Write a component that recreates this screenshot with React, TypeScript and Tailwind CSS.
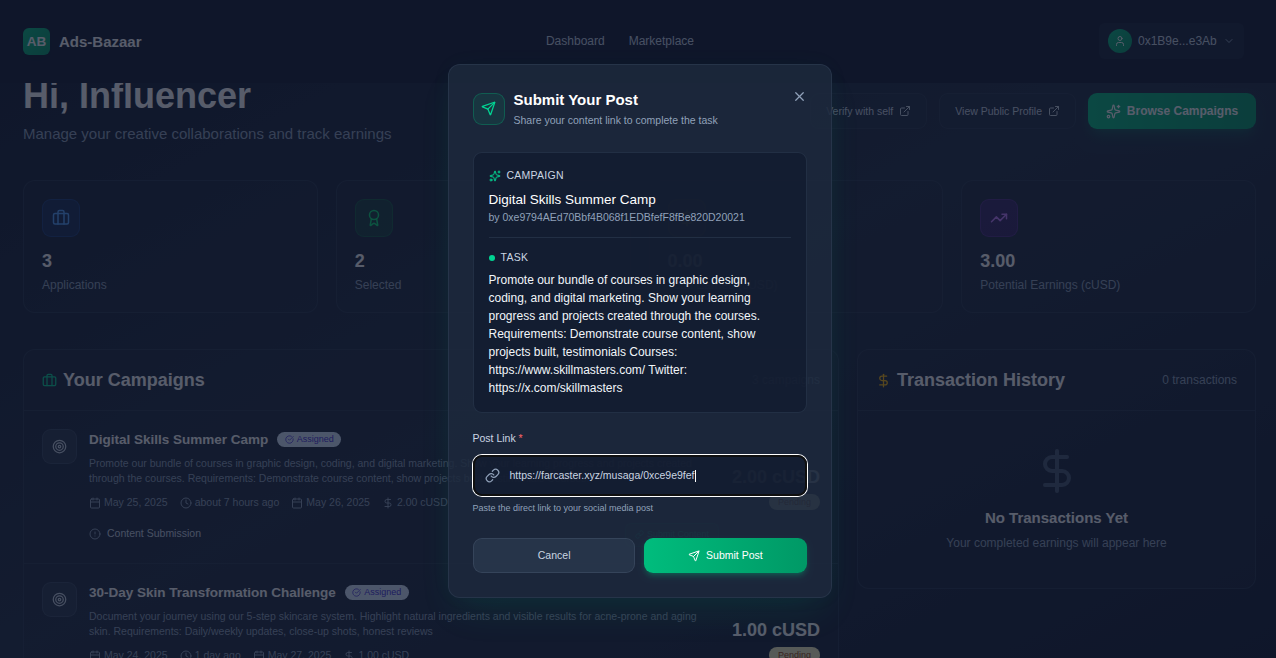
import React from "react";
import {
  Award,
  Briefcase,
  Calendar,
  ChevronDown,
  CircleAlert,
  CircleCheckBig,
  Clock,
  DollarSign,
  ExternalLink,
  Link as LinkIcon,
  Send,
  Sparkles,
  Target,
  TrendingUp,
  User,
  X,
} from "lucide-react";

type Stat = { value: string; label: string; icon: React.ReactNode; tone: string };

const stats: Stat[] = [
  {
    value: "3",
    label: "Applications",
    icon: <Briefcase className="size-[18px]" />,
    tone: "bg-blue-600/15 border-blue-500/20 text-blue-400",
  },
  {
    value: "2",
    label: "Selected",
    icon: <Award className="size-[18px]" />,
    tone: "bg-green-500/15 border-green-500/20 text-green-400",
  },
  {
    value: "0.00",
    label: "Total Earned (cUSD)",
    icon: <DollarSign className="size-[18px]" />,
    tone: "bg-amber-500/15 border-amber-500/20 text-amber-400",
  },
  {
    value: "3.00",
    label: "Potential Earnings (cUSD)",
    icon: <TrendingUp className="size-[18px]" />,
    tone: "bg-purple-600/20 border-purple-500/20 text-purple-400",
  },
];

type Campaign = {
  title: string;
  lines: string[];
  start: string;
  applied: string;
  due: string;
  amount: string;
};

const campaigns: Campaign[] = [
  {
    title: "Digital Skills Summer Camp",
    lines: [
      "Promote our bundle of courses in graphic design, coding, and digital marketing. Show your learning progress and projects created",
      "through the courses. Requirements: Demonstrate course content, show projects built, testimonials Courses:",
    ],
    start: "May 25, 2025",
    applied: "about 7 hours ago",
    due: "May 26, 2025",
    amount: "2.00 cUSD",
  },
  {
    title: "30-Day Skin Transformation Challenge",
    lines: [
      "Document your journey using our 5-step skincare system. Highlight natural ingredients and visible results for acne-prone and aging",
      "skin. Requirements: Daily/weekly updates, close-up shots, honest reviews",
    ],
    start: "May 24, 2025",
    applied: "1 day ago",
    due: "May 27, 2025",
    amount: "1.00 cUSD",
  },
];

function Header() {
  return (
    <header className="flex h-[83px] shrink-0 items-center justify-between bg-slate-900 pr-8 pl-[23px]">
      <div className="flex w-[360px] items-center gap-[9px]">
        <div className="flex size-[27px] items-center justify-center rounded-md bg-linear-to-br from-emerald-500 to-emerald-600 pt-px text-[13.5px] font-bold text-white shadow-lg">
          AB
        </div>
        <span className="text-[15px] leading-[21px] font-bold text-white">Ads-Bazaar</span>
      </div>
      <nav className="flex gap-6 pr-[14px] pb-0.5 text-[12px] text-slate-300">
        <a>Dashboard</a>
        <a>Marketplace</a>
      </nav>
      <div className="flex w-[373px] justify-end pb-px">
        <button className="flex h-9 w-[145px] items-center rounded-md bg-slate-800/50 pl-[9px] text-[12px] text-slate-300">
          <span className="flex size-6 items-center justify-center rounded-full bg-linear-to-br from-emerald-500 to-emerald-600 text-white">
            <User className="size-3" />
          </span>
          <span className="ml-1.5">0x1B9e...e3Ab</span>
          <ChevronDown className="ml-1.5 size-3 text-slate-400" />
        </button>
      </div>
    </header>
  );
}

function Hero() {
  return (
    <section className="-mt-[5.5px] flex h-[102.5px] justify-between">
      <div>
        <h1 className="text-[36px] leading-[36px] font-bold text-white">Hi, Influencer</h1>
        <p className="mt-[9px] text-[15px] leading-[21px] text-slate-400">
          Manage your creative collaborations and track earnings
        </p>
      </div>
      <div className="mt-[15.5px] flex h-9 items-center gap-3">
        <button className="flex h-9 items-center gap-1.5 rounded-[9px] border border-slate-700/50 bg-slate-800/50 px-[15px] text-[10.5px] text-slate-300">
          <span className="pt-px">Verify with self</span> <ExternalLink className="size-3" />
        </button>
        <button className="flex h-9 items-center gap-1.5 rounded-[9px] border border-slate-700/50 bg-slate-800/50 px-[15px] text-[10.5px] text-slate-300">
          <span className="pt-px">View Public Profile</span> <ExternalLink className="size-3" />
        </button>
        <button className="flex h-9 w-[168px] items-center justify-center gap-1.5 rounded-[9px] bg-linear-to-r from-emerald-500 to-emerald-600 text-[12px] font-bold text-white shadow-lg shadow-emerald-500/20">
          <Sparkles className="size-[15px]" /> Browse Campaigns
        </button>
      </div>
    </section>
  );
}

function StatCard({ stat }: { stat: Stat }) {
  return (
    <div className="h-[133px] rounded-xl border border-slate-700/50 bg-slate-800/30 p-[18px]">
      <div className={`flex size-[38px] items-center justify-center rounded-[9px] border ${stat.tone}`}>{stat.icon}</div>
      <p className="mt-3 text-[18px] leading-6 font-bold text-white">{stat.value}</p>
      <p className="mt-[3px] text-[12px] leading-[18px] text-slate-400">{stat.label}</p>
    </div>
  );
}

function CampaignRow({ item }: { item: Campaign }) {
  return (
    <article className="flex h-[153px] shrink-0 border-b border-slate-700/50 p-[18px]">
      <div className="flex size-[35px] shrink-0 items-center justify-center rounded-[9px] border border-slate-600/50 bg-slate-700/50 text-slate-300">
        <Target className="size-[15px]" />
      </div>
      <div className="ml-3 min-w-0 flex-1">
        <div className="flex h-[21px] items-center gap-[9px]">
          <h3 className="text-[13.5px] leading-[21px] font-bold text-white">{item.title}</h3>
          <span className="flex h-[15px] items-center gap-[3px] rounded-full bg-blue-100 px-[7.5px] text-[9px] text-indigo-700">
            <CircleCheckBig className="size-[9px]" /> Assigned
          </span>
        </div>
        <p className="mt-1.5 text-[10.5px] leading-[15px] whitespace-nowrap text-slate-400">
          {item.lines.map((line) => (
            <span key={line} className="block">
              {line}
            </span>
          ))}
        </p>
        <div className="mt-[9px] flex gap-3 text-[10.5px] leading-[15px] whitespace-nowrap text-slate-400">
          <span className="flex items-center gap-[3px]">
            <Calendar className="size-3" /> {item.start}
          </span>
          <span className="flex items-center gap-[3px]">
            <Clock className="size-3" /> {item.applied}
          </span>
          <span className="flex items-center gap-[3px]">
            <Calendar className="size-3" /> {item.due}
          </span>
          <span className="flex items-center gap-[3px]">
            <DollarSign className="size-3" /> {item.amount}
          </span>
        </div>
        <div className="mt-3 flex h-6 items-center justify-between">
          <span className="flex items-center gap-1.5 pb-px text-[10.5px] leading-[15px] text-slate-300">
            <CircleAlert className="mt-px size-3 text-slate-400" /> Content Submission
          </span>
          <span className="mt-px mr-[-12px] flex h-6 w-[94px] items-center justify-center gap-[3px] rounded-md border border-emerald-500/20 bg-emerald-500/10 text-[9px] text-emerald-400">
            <LinkIcon className="size-[9px]" /> Submit Content
          </span>
        </div>
      </div>
      <div className="mt-9 ml-[25px] flex w-[88px] shrink-0 flex-col items-end">
        <p className="text-[18px] leading-6 font-bold whitespace-nowrap text-white">{item.amount}</p>
        <span className="mt-[5px] flex h-4 w-[51px] items-center justify-center rounded-full bg-yellow-100 pt-px text-[9px] text-amber-800">
          Pending
        </span>
      </div>
    </article>
  );
}

function CampaignPanel() {
  return (
    <section className="col-span-2 rounded-xl border border-slate-700/50 bg-slate-800/30">
      <div className="flex h-[61px] items-center justify-between border-b border-slate-700/50 px-[18px]">
        <h2 className="flex items-center gap-1.5 text-[18px] font-bold text-white">
          <Briefcase className="size-[15px] text-emerald-400" /> Your Campaigns
        </h2>
        <span className="text-[12px] text-slate-400">3 campaigns</span>
      </div>
      {campaigns.map((item) => (
        <CampaignRow key={item.title} item={item} />
      ))}
    </section>
  );
}

function TransactionPanel() {
  return (
    <section className="flex h-60 flex-col rounded-xl border border-slate-700/50 bg-slate-800/30">
      <div className="flex h-[61px] shrink-0 items-center justify-between border-b border-slate-700/50 px-[18px]">
        <h2 className="flex items-center gap-1.5 text-[18px] font-bold text-white">
          <DollarSign className="size-[15px] text-amber-400" /> Transaction History
        </h2>
        <span className="text-[12px] text-slate-400">0 transactions</span>
      </div>
      <div className="flex flex-col items-center pt-9">
        <DollarSign className="size-12 text-slate-600" />
        <h3 className="mt-3 text-[15px] leading-[21px] font-bold text-white">No Transactions Yet</h3>
        <p className="mt-1.5 text-[12px] leading-[18px] text-slate-400">Your completed earnings will appear here</p>
      </div>
    </section>
  );
}

function SubmitModal() {
  return (
    <div
      role="dialog"
      className="mt-16 ml-[3px] h-[534px] w-[384px] rounded-xl border border-slate-700/50 bg-slate-800/82 p-6 shadow-[0_19px_38px_-9px_rgba(0,188,125,0.12),0_0_24px_rgba(0,188,125,0.03)]"
    >
      <div className="flex items-start justify-between">
        <div className="flex items-center gap-[9px]">
          <div className="flex size-8 items-center justify-center rounded-[9px] border border-emerald-500/30 bg-emerald-500/10 text-emerald-400">
            <Send className="size-[15px]" />
          </div>
          <div>
            <h2 className="text-[15px] leading-[21px] font-bold text-white">Submit Your Post</h2>
            <p className="mt-[3px] text-[10.5px] leading-[15px] text-slate-400">
              Share your content link to complete the task
            </p>
          </div>
        </div>
        <X className="size-[15px] text-slate-400" />
      </div>

      <div className="mt-6 h-[261px] rounded-[9px] border border-slate-700/50 bg-slate-900/60 p-[15px]">
        <div className="flex items-center gap-1.5 text-[10.5px] leading-[15px] tracking-[0.025em] text-slate-300">
          <Sparkles className="size-3 text-emerald-400" /> CAMPAIGN
        </div>
        <h3 className="mt-1.5 text-[13.5px] leading-[21px] text-white">Digital Skills Summer Camp</h3>
        <p className="text-[10.5px] leading-[15px] text-slate-400">by 0xe9794AEd70Bbf4B068f1EDBfefF8fBe820D20021</p>
        <div className="mt-3 border-t border-slate-700/50 pt-3">
          <div className="flex items-center gap-1.5 text-[10.5px] leading-[15px] tracking-[0.025em] text-slate-300">
            <span className="mt-px size-1.5 rounded-full bg-emerald-400" /> TASK
          </div>
          <p className="mt-1.5 text-[12px] leading-[18px] text-slate-100">
            Promote our bundle of courses in graphic design, coding, and digital marketing. Show your learning progress
            and projects created through the courses. Requirements: Demonstrate course content, show projects built,
            testimonials Courses: https://www.skillmasters.com/ Twitter: https://x.com/skillmasters
          </p>
        </div>
      </div>

      <label className="mt-[18px] block text-[10.5px] leading-[15px] text-slate-300">
        Post Link <span className="text-red-400">*</span>
      </label>
      <div className="mt-[9px] flex h-[41px] items-center rounded-[9px] border-2 border-[#101010] bg-slate-900/60 pl-[10px] ring-1 ring-white">
        <LinkIcon className="size-[15px] text-slate-400" />
        <span className="ml-2.5 text-[10.5px] text-slate-300">https://farcaster.xyz/musaga/0xce9e9fef</span>
        <span className="h-3 w-px bg-white" />
      </div>
      <p className="mt-1.5 text-[9px] leading-3 text-slate-400">Paste the direct link to your social media post</p>

      <div className="mt-6 grid grid-cols-2 gap-[9px] pl-[0.5px] text-[10.5px]">
        <button className="h-[35px] rounded-[9px] border border-slate-600/50 bg-slate-700/50 text-slate-300">
          Cancel
        </button>
        <button className="flex h-[35px] items-center justify-center gap-1.5 rounded-[9px] bg-linear-to-r from-emerald-500 to-emerald-600 text-white shadow-md shadow-emerald-500/25">
          <Send className="size-3" /> Submit Post
        </button>
      </div>
    </div>
  );
}

export default function App() {
  return (
    <div className="relative h-[658px] w-[1276px] overflow-hidden font-['Liberation_Sans',Arial,sans-serif]">
      <div className="flex h-full flex-col bg-linear-to-br from-slate-900 via-slate-800 to-slate-900">
        <Header />
        <main className="min-h-0 flex-1 overflow-hidden pr-5 pl-[23px]">
          <Hero />
          <section className="grid grid-cols-4 gap-[18px]">
            {stats.map((stat) => (
              <StatCard key={stat.label} stat={stat} />
            ))}
          </section>
          <div className="mt-9 grid grid-cols-3 items-start gap-[18px]">
            <CampaignPanel />
            <TransactionPanel />
          </div>
        </main>
      </div>
      <div className="absolute inset-0 flex items-start justify-center bg-slate-900/70">
        <SubmitModal />
      </div>
    </div>
  );
}
